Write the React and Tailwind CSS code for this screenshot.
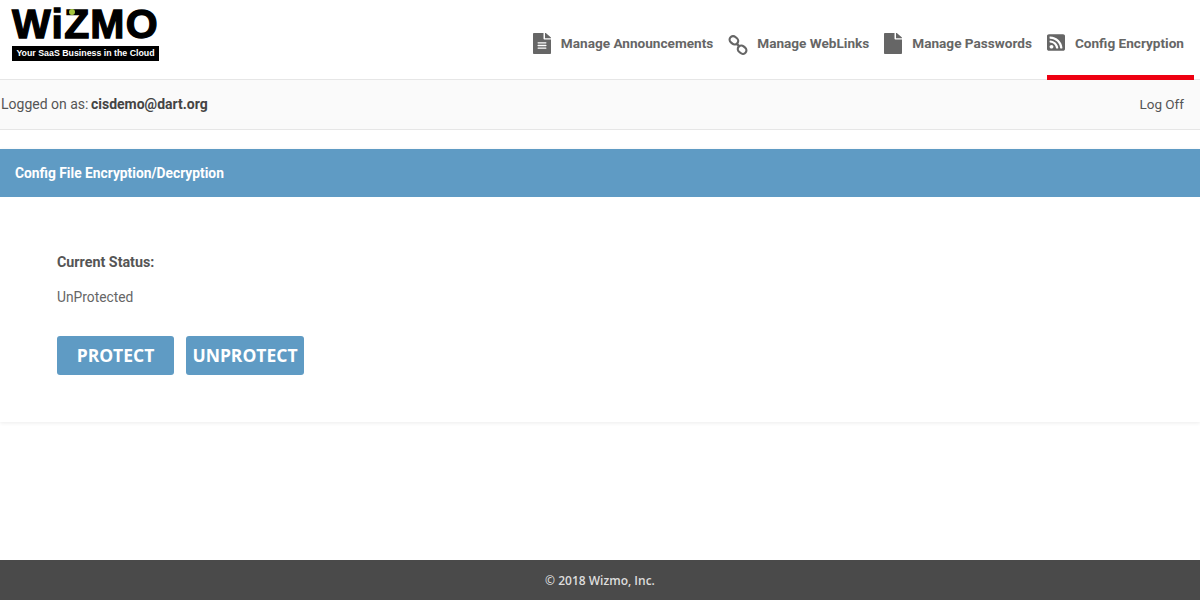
import React from 'react'
import { FaFileAlt, FaFile, FaRssSquare } from 'react-icons/fa'

function ChainIcon({ className }) {
  return (
    <svg viewBox="0 0 20 20" fill="none" stroke="currentColor" strokeWidth="2.2" className={className}>
      <rect x="1.4" y="1.8" width="9" height="7" rx="3.5" transform="rotate(40 5.9 5.3)" />
      <rect x="9.6" y="11.2" width="9" height="7" rx="3.5" transform="rotate(40 14.1 14.7)" />
      <path d="M8.6 8.6l2.8 2.8" />
    </svg>
  )
}

const NAV = [
  { icon: FaFileAlt, label: 'Manage Announcements', iconClass: 'w-[18px] h-[21px]', gap: 'gap-[10px]' },
  { icon: ChainIcon, label: 'Manage WebLinks', iconClass: 'w-[20px] h-[20px] mt-[2px]', gap: 'gap-[9px]' },
  { icon: FaFile, label: 'Manage Passwords', iconClass: 'w-[18px] h-[21px]', gap: 'gap-[10px]' },
  { icon: FaRssSquare, label: 'Config Encryption', iconClass: 'w-[18px] h-[19px]', gap: 'gap-[10px]', active: true },
]

function Logo() {
  return (
    <div className="ml-[12px] mt-[8px] w-[147px] flex flex-col items-stretch">
      <div className="relative h-[32px] text-black font-['Liberation_Sans',sans-serif] font-bold text-[41px] leading-[32px] tracking-[1.2px] [-webkit-text-stroke:1.3px_black] whitespace-nowrap">
        WiZMO
        <span className="absolute left-[57px] top-[1px] w-[6px] h-[6px] rounded-full bg-[#a4c43c]" />
      </div>
      <div className="mt-[6px] h-[15px] bg-black text-white text-[8.8px] leading-[15px] font-bold text-center font-['Liberation_Sans',sans-serif] whitespace-nowrap">
        Your SaaS Business in the Cloud
      </div>
    </div>
  )
}

export default function App() {
  return (
    <div className="relative h-[600px] w-[1200px] overflow-hidden bg-white font-['Roboto',sans-serif] text-[#555]">
      {/* Header */}
      <header className="h-[80px] flex justify-between border-b border-[#e6e6e6]">
        <Logo />
        <nav className="flex items-stretch gap-[5px] pr-[6px] h-[80px]">
          {NAV.map(({ icon: Icon, label, iconClass, gap, active }) => (
            <a
              key={label}
              className={`flex items-start pt-[33px] pr-[10px] ${gap} border-b-[5px] ${active ? 'border-[#ee0011]' : 'border-transparent'}`}
            >
              <Icon preserveAspectRatio="none" className={`${iconClass} shrink-0 text-[#666]`} />
              <span className="text-[13.6px] leading-[20px] font-bold text-[#666] whitespace-nowrap">{label}</span>
            </a>
          ))}
        </nav>
      </header>

      {/* Logged on bar */}
      <div className="h-[50px] flex items-center justify-between bg-[#fafafa] border-b border-[#e6e6e6] pl-px pr-[16px] text-[14px]">
        <span>
          Logged on as: <b className="font-bold text-[#444] -ml-px">cisdemo@dart.org</b>
        </span>
        <a className="text-[13.5px] text-[#555]">Log Off</a>
      </div>

      {/* Panel */}
      <section className="mt-[19px] h-[273px] shadow-[0_1px_4px_rgba(0,0,0,0.08)]">
        <h2 className="h-[48px] flex items-center pl-[15px] bg-[#5f9bc4] text-white text-[13.8px] font-bold">
          Config File Encryption/Decryption
        </h2>
        <div className="pl-[57px] pt-[56px]">
          <div className="text-[14.3px] leading-[18px] font-bold text-[#555]">Current Status:</div>
          <div className="mt-[17px] text-[13.8px] leading-[18px] text-[#666]">UnProtected</div>
          <div className="mt-[30px] flex gap-[12px]">
            <button className="w-[117px] h-[39px] rounded-[3px] bg-[#5f9bc4] text-white text-[17.5px] font-bold font-['Open_Sans',sans-serif]">
              PROTECT
            </button>
            <button className="w-[118px] h-[39px] rounded-[3px] bg-[#5f9bc4] text-white text-[17.5px] font-bold font-['Open_Sans',sans-serif] whitespace-nowrap">
              UNPROTECT
            </button>
          </div>
        </div>
      </section>

      {/* Footer */}
      <footer className="mt-[138px] h-[40px] flex items-center justify-center pt-px bg-[#4a4a4a] text-[#ddd] text-[12px] font-semibold font-['Open_Sans',sans-serif]">
        © 2018 Wizmo, Inc.
      </footer>
    </div>
  )
}
